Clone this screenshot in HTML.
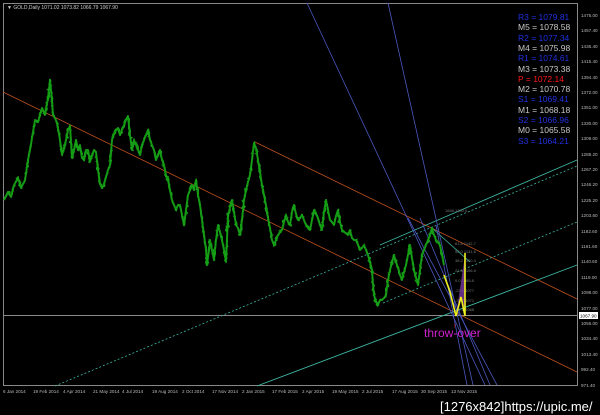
<!DOCTYPE html>
<html><head><meta charset="utf-8"><style>
html,body{margin:0;padding:0;background:#000;width:600px;height:415px;overflow:hidden}
svg{display:block}
text{font-family:"Liberation Sans",sans-serif}
</style></head><body>
<svg width="600" height="415" viewBox="0 0 600 415" xmlns="http://www.w3.org/2000/svg">
<defs>
<filter id="jag" x="-5%" y="-5%" width="110%" height="110%">
<feTurbulence type="fractalNoise" baseFrequency="0.25" numOctaves="2" seed="3" result="n"/>
<feDisplacementMap in="SourceGraphic" in2="n" scale="5" xChannelSelector="R" yChannelSelector="G"/>
</filter>
<polyline id="px" fill="none" stroke-linejoin="round" points="4,200 8,192 11,197 14,185 18,178 21,188 25,180 28,160 30,150 33,132 35,120 38,122 42,108 45,115 48,98 50,80 52,100 53,115 56,120 58,128 60,140 62,155 64,148 66,140 68,130 70,126 72,158 74,150 76,140 78,150 80,145 82,158 84,160 86,150 88,150 90,162 92,155 94,150 96,152 98,170 100,184 102,188 104,184 108,170 110,165 112,140 113,135 116,130 118,128 120,135 124,125 126,120 128,116 130,135 132,150 134,140 136,145 138,150 140,155 142,145 144,140 146,135 148,130 150,140 152,145 154,150 156,160 158,155 160,150 162,160 164,165 166,175 168,180 170,190 172,200 174,205 176,210 178,205 180,205 182,215 184,225 186,210 188,195 190,190 192,185 194,190 196,180 198,195 200,205 202,220 204,235 206,250 207,265 209,250 210,240 212,250 214,260 216,240 218,225 220,232 222,240 224,250 226,262 228,215 230,208 232,200 234,212 236,225 238,228 240,235 242,220 244,200 246,190 248,182 250,175 252,160 254,143 256,148 258,160 260,172 262,185 264,195 266,205 268,218 270,228 272,240 274,245 276,240 278,235 280,232 282,230 284,222 286,215 288,222 290,225 292,212 294,205 296,214 298,220 300,218 302,215 304,220 306,225 308,228 310,230 312,220 314,210 316,214 318,218 320,225 322,230 324,212 326,200 328,210 330,220 332,222 334,225 336,216 338,210 340,222 342,230 344,232 348,235 350,230 352,238 354,240 356,240 358,245 360,250 362,248 364,245 366,250 368,255 370,262 372,270 373,285 374,295 376,302 378,305 380,300 382,300 384,298 386,295 388,280 390,270 392,262 394,255 396,262 398,268 400,275 402,280 404,272 406,265 408,255 410,245 412,258 414,270 416,278 418,285 420,270 422,255 424,250 426,245 428,240 430,235 432,228 434,235 436,240 438,242 440,245 442,255 444,265"/>
</defs>
<rect width="600" height="415" fill="#000"/>
<line x1="3" y1="3.5" x2="578" y2="3.5" stroke="#888" stroke-width="1"/>
<line x1="3.5" y1="3" x2="3.5" y2="385" stroke="#888"/>
<line x1="577.5" y1="3" x2="577.5" y2="385" stroke="#888"/>
<line x1="3" y1="385.5" x2="578" y2="385.5" stroke="#888"/>
<text x="7" y="9" font-size="5" fill="#ccc">▼ GOLD,Daily  1071.02  1073.82  1066.79  1067.90</text>

<line x1="3" y1="315.5" x2="577" y2="315.5" stroke="#8a8a8a" stroke-width="1"/>

<line x1="3" y1="92" x2="577" y2="372" stroke="#c0501e" stroke-width="0.8"/>
<line x1="255" y1="142" x2="577" y2="299" stroke="#c0501e" stroke-width="0.8"/>

<line x1="55" y1="386" x2="577" y2="166" stroke="#3cb4a0" stroke-width="0.8" stroke-dasharray="2,2"/>
<line x1="380" y1="245" x2="577" y2="160" stroke="#3cb4a0" stroke-width="0.9"/>
<line x1="383" y1="303" x2="577" y2="222" stroke="#3cb4a0" stroke-width="0.8" stroke-dasharray="2,2"/>
<line x1="257" y1="386" x2="577" y2="265" stroke="#3cb4a0" stroke-width="0.9"/>
<line x1="432" y1="228" x2="470" y2="262" stroke="#3cb4a0" stroke-width="0.8"/>

<g stroke="#4a58c0" stroke-width="0.8">
<line x1="307" y1="3" x2="485" y2="385"/>
<line x1="388" y1="3" x2="473" y2="385"/>
<line x1="408" y1="218" x2="497" y2="385"/>
<line x1="420" y1="218" x2="490" y2="385"/>
<line x1="436" y1="225" x2="467" y2="385"/>
</g>

<use href="#px" stroke="#139013" stroke-width="2"/>
<use href="#px" stroke="#18a018" stroke-width="1.5" filter="url(#jag)"/>

<g font-size="4" fill="#777">
<text x="445" y="212">1668.1200.0</text>
<text x="455" y="245">61.8 1142.7</text>
<text x="455" y="253">50.0 1131.6</text>
<text x="455" y="262">38.2 1120.4</text>
<text x="455" y="272">23.6 1106.6</text>
<text x="455" y="282">0.0 1085.8</text>
<text x="455" y="292">-23.6 1077</text>
<text x="455" y="302">-38.2 1071</text>
<text x="455" y="311">-61.8 1068</text>
</g>

<polygon points="456,316 461,297 465,316 465,255" fill="#7a3aa0" opacity="0.8"/>
<polyline fill="none" stroke="#f0f020" stroke-width="1.6" points="444,275 450,292 456,316 461,297 465,316 465,253"/>

<text x="453" y="328" font-size="7" fill="#e02020">↑</text>
<text x="424" y="337" font-size="12" fill="#d020d0">throw-over</text>

<g font-size="8.5" text-anchor="start">
<text x="518" y="20" fill="#2030e0">R3 = 1079.81</text>
<text x="518" y="30" fill="#c8c8c8">M5 = 1078.58</text>
<text x="518" y="41" fill="#2030e0">R2 = 1077.34</text>
<text x="518" y="51" fill="#c8c8c8">M4 = 1075.98</text>
<text x="518" y="61" fill="#2030e0">R1 = 1074.61</text>
<text x="518" y="72" fill="#c8c8c8">M3 = 1073.38</text>
<text x="518" y="82" fill="#ff1818">P  = 1072.14</text>
<text x="518" y="92" fill="#c8c8c8">M2 = 1070.78</text>
<text x="518" y="102" fill="#2030e0">S1 = 1069.41</text>
<text x="518" y="113" fill="#c8c8c8">M1 = 1068.18</text>
<text x="518" y="123" fill="#2030e0">S2 = 1066.96</text>
<text x="518" y="133" fill="#c8c8c8">M0 = 1065.58</text>
<text x="518" y="144" fill="#2030e0">S3 = 1064.21</text>
</g>

<g font-size="4.6" fill="#bbb">
<text x="581" y="17">1475.00</text><text x="581" y="32">1457.40</text><text x="581" y="48">1436.40</text><text x="581" y="63">1415.40</text><text x="581" y="79">1394.40</text><text x="581" y="94">1372.00</text><text x="581" y="109">1351.00</text><text x="581" y="125">1330.00</text><text x="581" y="140">1309.00</text><text x="581" y="156">1288.20</text><text x="581" y="171">1267.20</text><text x="581" y="186">1246.20</text><text x="581" y="202">1225.20</text><text x="581" y="217">1203.60</text><text x="581" y="233">1182.60</text><text x="581" y="248">1161.60</text><text x="581" y="263">1140.60</text><text x="581" y="279">1119.00</text><text x="581" y="294">1098.00</text><text x="581" y="310">1077.00</text><text x="581" y="325">1056.00</text><text x="581" y="340">1034.40</text><text x="581" y="356">1013.40</text><text x="581" y="371">992.40</text><text x="581" y="387">971.40</text>
</g>
<rect x="579" y="312" width="19" height="7" fill="#fff"/>
<text x="580" y="317.5" font-size="4.6" fill="#000">1067.90</text>

<g font-size="4.6" fill="#bbb">
<text x="3" y="393">6 Jan 2014</text><text x="33" y="393">19 Feb 2014</text><text x="63" y="393">4 Apr 2014</text><text x="93" y="393">21 May 2014</text><text x="122" y="393">4 Jul 2014</text><text x="152" y="393">19 Aug 2014</text><text x="182" y="393">2 Oct 2014</text><text x="212" y="393">17 Nov 2014</text><text x="242" y="393">2 Jan 2015</text><text x="272" y="393">17 Feb 2015</text><text x="302" y="393">2 Apr 2015</text><text x="332" y="393">19 May 2015</text><text x="362" y="393">2 Jul 2015</text><text x="392" y="393">17 Aug 2015</text><text x="421" y="393">30 Sep 2015</text><text x="451" y="393">13 Nov 2015</text>
</g>

<text x="440" y="411" font-size="13" fill="#fff">[1276x842]https://upic.me/</text>
</svg>
</body></html>
